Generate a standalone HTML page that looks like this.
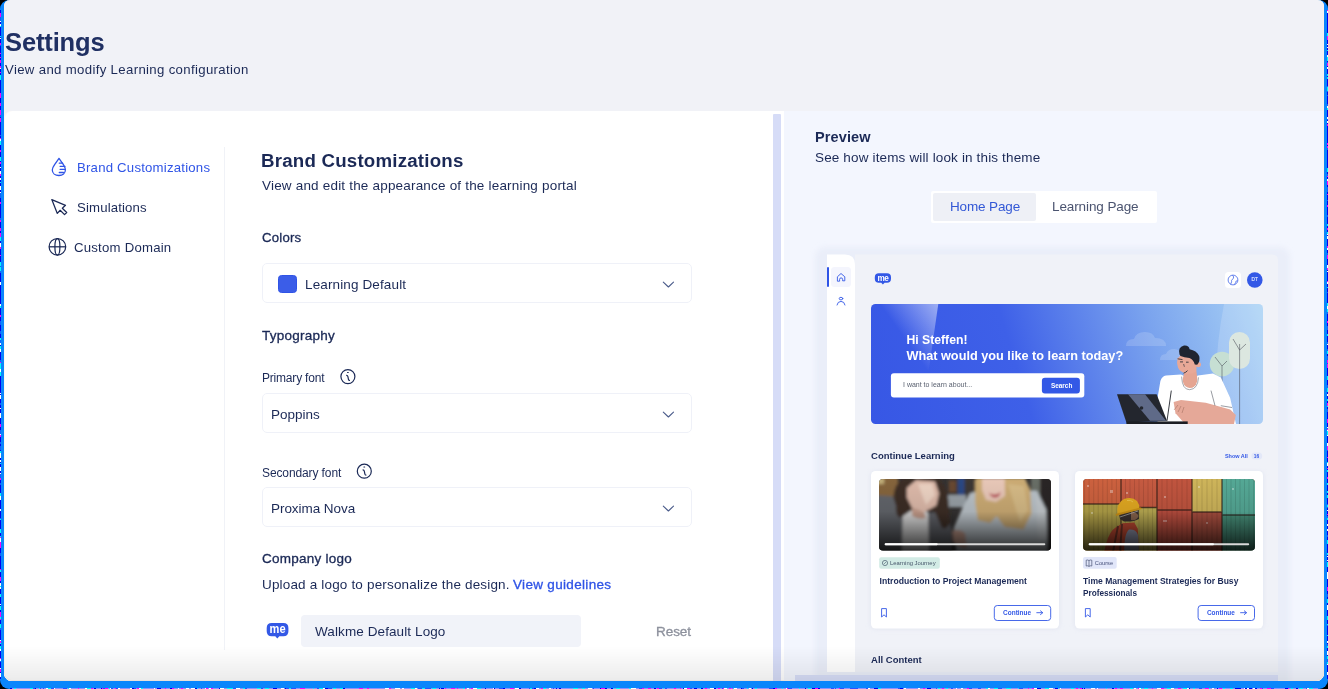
<!DOCTYPE html>
<html><head><meta charset="utf-8">
<style>
*{margin:0;padding:0;box-sizing:border-box}
html,body{width:1328px;height:689px;overflow:hidden;background:#000}
body{font-family:"Liberation Sans",sans-serif;color:#1b2956;position:relative}
.a{position:absolute;white-space:nowrap;line-height:1;will-change:transform}
.b{font-weight:700}
svg.ic{position:absolute;left:0;top:0;overflow:visible;will-change:transform}
#frame{position:absolute;left:0;top:0;width:1328px;height:689px;background:#0a86fc;border-radius:9px}
#noiseL{position:absolute;left:0;top:10px;width:1px;height:669px;background:linear-gradient(180deg,#0000f0 0px 3px,#ff00ff 3px 7px,#1060ff 7px 11px,#ffffff 11px 12px,#0000f0 12px 13px,#0000f0 13px 14px,#ffffff 14px 16px,#00ffff 16px 17px,#0000f0 17px 20px,#0000f0 20px 23px,#0000f0 23px 24px,#0000f0 24px 26px,#00ffff 26px 27px,#0000f0 27px 28px,#ffffff 28px 29px,#0000f0 29px 30px,#0000f0 30px 31px,#0000f0 31px 32px,#0000f0 32px 33px,#ff00ff 33px 35px,#1060ff 35px 36px,#0000f0 36px 40px,#0000f0 40px 41px,#0000f0 41px 43px,#ff00ff 43px 44px,#0000f0 44px 46px,#0000f0 46px 47px,#ff00ff 47px 48px,#0000f0 48px 50px,#ff00ff 50px 53px,#0000f0 53px 54px,#0000f0 54px 56px,#ff00ff 56px 58px,#ffffff 58px 59px,#0000f0 59px 61px,#0000f0 61px 62px,#ff00ff 62px 63px,#0000f0 63px 65px,#00ffff 65px 68px,#00ffff 68px 70px,#0000f0 70px 73px,#0000f0 73px 75px,#0000f0 75px 79px,#0000f0 79px 82px,#0000f0 82px 83px,#ff00ff 83px 85px,#ff00ff 85px 88px,#0000f0 88px 91px,#0000f0 91px 93px,#ff00ff 93px 96px,#0000f0 96px 98px,#0000f0 98px 100px,#ff00ff 100px 101px,#ff00ff 101px 104px,#ff00ff 104px 105px,#1060ff 105px 107px,#0000f0 107px 108px,#ff00ff 108px 112px,#0000f0 112px 114px,#0000f0 114px 115px,#0000f0 115px 119px,#0000f0 119px 121px,#0000f0 121px 125px,#1060ff 125px 126px,#0000f0 126px 128px,#ff00ff 128px 129px,#ffffff 129px 131px,#00ffff 131px 135px,#0000f0 135px 136px,#0000f0 136px 140px,#ff00ff 140px 142px,#0000f0 142px 143px,#0000f0 143px 147px,#00ffff 147px 151px,#0000f0 151px 152px,#ff00ff 152px 154px,#0000f0 154px 155px,#0000f0 155px 157px,#ffffff 157px 158px,#0000f0 158px 161px,#ffffff 161px 164px,#ff00ff 164px 166px,#0000f0 166px 168px,#ffffff 168px 170px,#0000f0 170px 172px,#00ffff 172px 173px,#0000f0 173px 176px,#ffffff 176px 180px,#0000f0 180px 182px,#ffffff 182px 183px,#1060ff 183px 185px,#1060ff 185px 188px,#0000f0 188px 190px,#0000f0 190px 192px,#ff00ff 192px 194px,#0000f0 194px 197px,#0000f0 197px 199px,#0000f0 199px 203px,#0000f0 203px 205px,#0000f0 205px 208px,#1060ff 208px 210px,#ff00ff 210px 212px,#0000f0 212px 216px,#0000f0 216px 218px,#ff00ff 218px 221px,#0000f0 221px 223px,#ff00ff 223px 227px,#00ffff 227px 231px,#0000f0 231px 233px,#ffffff 233px 237px,#ff00ff 237px 239px,#0000f0 239px 242px,#0000f0 242px 245px,#ff00ff 245px 246px,#0000f0 246px 248px,#0000f0 248px 252px,#00ffff 252px 256px,#1060ff 256px 257px,#00ffff 257px 261px,#1060ff 261px 263px,#0000f0 263px 267px,#0000f0 267px 271px,#0000f0 271px 272px,#ffffff 272px 275px,#0000f0 275px 278px,#0000f0 278px 279px,#0000f0 279px 283px,#0000f0 283px 285px,#0000f0 285px 286px,#0000f0 286px 287px,#0000f0 287px 289px,#0000f0 289px 291px,#0000f0 291px 294px,#ffffff 294px 296px,#00ffff 296px 298px,#0000f0 298px 302px,#0000f0 302px 305px,#ff00ff 305px 306px,#ff00ff 306px 307px,#0000f0 307px 309px,#0000f0 309px 311px,#1060ff 311px 315px,#0000f0 315px 317px,#0000f0 317px 320px,#0000f0 320px 321px,#1060ff 321px 324px,#0000f0 324px 326px,#0000f0 326px 328px,#00ffff 328px 330px,#1060ff 330px 333px,#ffffff 333px 335px,#0000f0 335px 336px,#00ffff 336px 339px,#ffffff 339px 342px,#0000f0 342px 343px,#0000f0 343px 346px,#0000f0 346px 348px,#0000f0 348px 350px,#1060ff 350px 352px,#ff00ff 352px 353px,#00ffff 353px 357px,#00ffff 357px 359px,#ffffff 359px 360px,#ffffff 360px 362px,#00ffff 362px 366px,#0000f0 366px 368px,#0000f0 368px 371px,#0000f0 371px 375px,#0000f0 375px 377px,#0000f0 377px 379px,#0000f0 379px 381px,#0000f0 381px 383px,#ffffff 383px 384px,#0000f0 384px 385px,#ffffff 385px 389px,#0000f0 389px 390px,#0000f0 390px 391px,#0000f0 391px 393px,#1060ff 393px 395px,#0000f0 395px 398px,#ffffff 398px 399px,#0000f0 399px 400px,#0000f0 400px 402px,#0000f0 402px 403px,#ffffff 403px 405px,#ffffff 405px 408px,#0000f0 408px 411px,#0000f0 411px 412px,#0000f0 412px 414px,#ff00ff 414px 417px,#0000f0 417px 420px,#1060ff 420px 424px,#ffffff 424px 425px,#ff00ff 425px 427px,#0000f0 427px 431px,#0000f0 431px 432px,#1060ff 432px 434px,#0000f0 434px 436px,#1060ff 436px 440px,#0000f0 440px 441px,#00ffff 441px 443px,#ffffff 443px 446px,#ffffff 446px 448px,#0000f0 448px 450px,#ffffff 450px 452px,#0000f0 452px 453px,#00ffff 453px 454px,#0000f0 454px 457px,#ffffff 457px 461px,#0000f0 461px 463px,#ffffff 463px 464px,#1060ff 464px 468px,#ff00ff 468px 470px,#0000f0 470px 473px,#1060ff 473px 475px,#0000f0 475px 476px,#0000f0 476px 480px,#0000f0 480px 482px,#0000f0 482px 483px,#00ffff 483px 485px,#00ffff 485px 486px,#ffffff 486px 490px,#0000f0 490px 491px,#0000f0 491px 492px,#0000f0 492px 495px,#0000f0 495px 499px,#ffffff 499px 501px,#0000f0 501px 502px,#0000f0 502px 505px,#0000f0 505px 507px,#0000f0 507px 508px,#1060ff 508px 509px,#00ffff 509px 510px,#0000f0 510px 514px,#0000f0 514px 516px,#0000f0 516px 519px,#00ffff 519px 523px,#0000f0 523px 526px,#00ffff 526px 527px,#ff00ff 527px 528px,#ffffff 528px 532px,#ff00ff 532px 534px,#ff00ff 534px 538px,#0000f0 538px 539px,#0000f0 539px 543px,#1060ff 543px 544px,#1060ff 544px 546px,#0000f0 546px 549px,#0000f0 549px 551px,#0000f0 551px 554px,#0000f0 554px 556px,#0000f0 556px 559px,#ff00ff 559px 560px,#00ffff 560px 562px,#0000f0 562px 563px,#0000f0 563px 567px,#ff00ff 567px 571px,#0000f0 571px 572px,#0000f0 572px 573px,#ffffff 573px 576px,#00ffff 576px 577px,#ffffff 577px 579px,#0000f0 579px 581px,#0000f0 581px 584px,#00ffff 584px 587px,#0000f0 587px 588px,#0000f0 588px 590px,#0000f0 590px 594px,#ffffff 594px 595px,#0000f0 595px 596px,#00ffff 596px 600px,#0000f0 600px 602px,#ff00ff 602px 604px,#ff00ff 604px 607px,#00ffff 607px 609px,#ff00ff 609px 610px,#0000f0 610px 614px,#00ffff 614px 618px,#1060ff 618px 620px,#0000f0 620px 621px,#0000f0 621px 625px,#0000f0 625px 627px,#0000f0 627px 628px,#0000f0 628px 629px,#0000f0 629px 630px,#ffffff 630px 631px,#ff00ff 631px 633px,#00ffff 633px 634px,#0000f0 634px 636px,#00ffff 636px 639px,#ffffff 639px 641px,#0000f0 641px 643px,#0000f0 643px 644px,#0000f0 644px 648px,#ff00ff 648px 649px,#ffffff 649px 651px,#1060ff 651px 652px,#0000f0 652px 654px,#0000f0 654px 656px,#0000f0 656px 658px,#ffffff 658px 659px,#ff00ff 659px 660px,#ff00ff 660px 662px,#0000f0 662px 663px,#ffffff 663px 667px,#0000f0 667px 669px)}
#noiseR{position:absolute;left:1327px;top:10px;width:1px;height:669px;background:linear-gradient(180deg,#ff00ff 0px 1px,#ffffff 1px 3px,#0000f0 3px 7px,#0000f0 7px 11px,#0000f0 11px 12px,#0000f0 12px 16px,#0000f0 16px 19px,#0000f0 19px 23px,#00ffff 23px 26px,#ff00ff 26px 30px,#0000f0 30px 34px,#ffffff 34px 35px,#0000f0 35px 37px,#ffffff 37px 38px,#0000f0 38px 39px,#0000f0 39px 40px,#00ffff 40px 41px,#0000f0 41px 45px,#ffffff 45px 46px,#ffffff 46px 47px,#00ffff 47px 51px,#0000f0 51px 52px,#1060ff 52px 53px,#ff00ff 53px 56px,#0000f0 56px 57px,#ffffff 57px 58px,#ffffff 58px 59px,#0000f0 59px 60px,#0000f0 60px 64px,#00ffff 64px 66px,#0000f0 66px 67px,#00ffff 67px 69px,#0000f0 69px 71px,#0000f0 71px 75px,#0000f0 75px 76px,#1060ff 76px 77px,#00ffff 77px 81px,#1060ff 81px 82px,#0000f0 82px 83px,#0000f0 83px 85px,#1060ff 85px 86px,#0000f0 86px 87px,#0000f0 87px 91px,#0000f0 91px 94px,#1060ff 94px 96px,#ffffff 96px 98px,#00ffff 98px 100px,#0000f0 100px 103px,#0000f0 103px 107px,#ffffff 107px 109px,#1060ff 109px 110px,#0000f0 110px 111px,#ffffff 111px 113px,#0000f0 113px 114px,#ff00ff 114px 116px,#0000f0 116px 117px,#0000f0 117px 120px,#0000f0 120px 122px,#0000f0 122px 126px,#0000f0 126px 128px,#0000f0 128px 130px,#0000f0 130px 132px,#0000f0 132px 133px,#ff00ff 133px 135px,#0000f0 135px 136px,#ff00ff 136px 138px,#1060ff 138px 140px,#0000f0 140px 141px,#0000f0 141px 145px,#0000f0 145px 148px,#0000f0 148px 150px,#0000f0 150px 154px,#0000f0 154px 158px,#00ffff 158px 162px,#0000f0 162px 164px,#1060ff 164px 166px,#ff00ff 166px 167px,#0000f0 167px 168px,#0000f0 168px 169px,#ffffff 169px 171px,#ff00ff 171px 175px,#0000f0 175px 177px,#1060ff 177px 178px,#1060ff 178px 182px,#0000f0 182px 183px,#0000f0 183px 184px,#ff00ff 184px 185px,#0000f0 185px 187px,#0000f0 187px 190px,#1060ff 190px 191px,#0000f0 191px 193px,#0000f0 193px 195px,#ff00ff 195px 197px,#0000f0 197px 198px,#0000f0 198px 201px,#0000f0 201px 205px,#1060ff 205px 207px,#0000f0 207px 210px,#0000f0 210px 214px,#00ffff 214px 216px,#0000f0 216px 218px,#ff00ff 218px 220px,#0000f0 220px 222px,#00ffff 222px 224px,#ffffff 224px 225px,#0000f0 225px 226px,#ffffff 226px 229px,#0000f0 229px 231px,#0000f0 231px 232px,#0000f0 232px 234px,#0000f0 234px 235px,#0000f0 235px 236px,#ff00ff 236px 238px,#ffffff 238px 240px,#0000f0 240px 241px,#0000f0 241px 243px,#1060ff 243px 245px,#ff00ff 245px 248px,#ff00ff 248px 249px,#0000f0 249px 251px,#0000f0 251px 255px,#ffffff 255px 258px,#ff00ff 258px 260px,#0000f0 260px 261px,#ffffff 261px 262px,#0000f0 262px 264px,#0000f0 264px 265px,#0000f0 265px 267px,#0000f0 267px 271px,#ff00ff 271px 272px,#ffffff 272px 274px,#0000f0 274px 277px,#00ffff 277px 278px,#0000f0 278px 282px,#1060ff 282px 283px,#0000f0 283px 286px,#0000f0 286px 288px,#0000f0 288px 290px,#0000f0 290px 293px,#00ffff 293px 296px,#ffffff 296px 299px,#00ffff 299px 302px,#1060ff 302px 304px,#0000f0 304px 308px,#0000f0 308px 311px,#ff00ff 311px 313px,#0000f0 313px 316px,#1060ff 316px 320px,#0000f0 320px 321px,#0000f0 321px 323px,#0000f0 323px 324px,#00ffff 324px 326px,#0000f0 326px 328px,#0000f0 328px 330px,#0000f0 330px 331px,#0000f0 331px 332px,#1060ff 332px 334px,#ffffff 334px 335px,#0000f0 335px 338px,#0000f0 338px 339px,#1060ff 339px 341px,#00ffff 341px 343px,#00ffff 343px 344px,#0000f0 344px 346px,#1060ff 346px 350px,#ff00ff 350px 351px,#ff00ff 351px 353px,#1060ff 353px 354px,#ff00ff 354px 358px,#0000f0 358px 359px,#0000f0 359px 360px,#0000f0 360px 362px,#0000f0 362px 365px,#0000f0 365px 366px,#00ffff 366px 370px,#0000f0 370px 371px,#0000f0 371px 375px,#1060ff 375px 378px,#00ffff 378px 382px,#0000f0 382px 384px,#ffffff 384px 386px,#0000f0 386px 389px,#00ffff 389px 391px,#0000f0 391px 393px,#ff00ff 393px 396px,#00ffff 396px 397px,#0000f0 397px 398px,#0000f0 398px 399px,#1060ff 399px 402px,#0000f0 402px 405px,#0000f0 405px 407px,#0000f0 407px 409px,#ff00ff 409px 413px,#0000f0 413px 417px,#ffffff 417px 418px,#1060ff 418px 419px,#ff00ff 419px 420px,#ffffff 420px 421px,#00ffff 421px 425px,#ffffff 425px 426px,#0000f0 426px 427px,#0000f0 427px 428px,#0000f0 428px 429px,#0000f0 429px 431px,#0000f0 431px 433px,#ffffff 433px 436px,#ff00ff 436px 440px,#1060ff 440px 441px,#0000f0 441px 444px,#0000f0 444px 446px,#0000f0 446px 447px,#ff00ff 447px 448px,#0000f0 448px 450px,#0000f0 450px 452px,#00ffff 452px 453px,#ffffff 453px 456px,#0000f0 456px 458px,#ff00ff 458px 459px,#0000f0 459px 460px,#00ffff 460px 462px,#0000f0 462px 464px,#0000f0 464px 466px,#0000f0 466px 467px,#ff00ff 467px 469px,#0000f0 469px 473px,#00ffff 473px 475px,#0000f0 475px 476px,#0000f0 476px 478px,#0000f0 478px 481px,#00ffff 481px 483px,#0000f0 483px 485px,#00ffff 485px 488px,#0000f0 488px 489px,#0000f0 489px 491px,#0000f0 491px 493px,#0000f0 493px 494px,#1060ff 494px 495px,#00ffff 495px 497px,#1060ff 497px 498px,#0000f0 498px 500px,#ffffff 500px 501px,#0000f0 501px 503px,#0000f0 503px 504px,#ff00ff 504px 505px,#0000f0 505px 506px,#1060ff 506px 508px,#00ffff 508px 510px,#0000f0 510px 513px,#0000f0 513px 514px,#ffffff 514px 515px,#ffffff 515px 516px,#0000f0 516px 519px,#ffffff 519px 521px,#0000f0 521px 524px,#0000f0 524px 525px,#1060ff 525px 527px,#0000f0 527px 529px,#0000f0 529px 530px,#00ffff 530px 532px,#00ffff 532px 534px,#0000f0 534px 535px,#0000f0 535px 537px,#0000f0 537px 539px,#0000f0 539px 541px,#0000f0 541px 543px,#00ffff 543px 545px,#0000f0 545px 546px,#ffffff 546px 547px,#0000f0 547px 549px,#0000f0 549px 550px,#ffffff 550px 551px,#0000f0 551px 552px,#00ffff 552px 556px,#00ffff 556px 557px,#0000f0 557px 558px,#0000f0 558px 562px,#ffffff 562px 566px,#ffffff 566px 568px,#ffffff 568px 569px,#0000f0 569px 570px,#0000f0 570px 572px,#0000f0 572px 573px,#0000f0 573px 575px,#0000f0 575px 577px,#ff00ff 577px 581px,#0000f0 581px 583px,#0000f0 583px 584px,#1060ff 584px 587px,#0000f0 587px 588px,#0000f0 588px 589px,#00ffff 589px 593px,#0000f0 593px 595px,#ffffff 595px 597px,#ffffff 597px 600px,#0000f0 600px 601px,#0000f0 601px 603px,#0000f0 603px 606px,#00ffff 606px 610px,#0000f0 610px 611px,#0000f0 611px 613px,#0000f0 613px 614px,#00ffff 614px 615px,#1060ff 615px 616px,#0000f0 616px 620px,#0000f0 620px 622px,#0000f0 622px 625px,#00ffff 625px 626px,#0000f0 626px 628px,#0000f0 628px 631px,#ffffff 631px 633px,#0000f0 633px 634px,#1060ff 634px 636px,#00ffff 636px 638px,#0000f0 638px 640px,#0000f0 640px 641px,#ffffff 641px 645px,#0000f0 645px 646px,#00ffff 646px 649px,#1060ff 649px 650px,#1060ff 650px 652px,#00ffff 652px 654px,#ffffff 654px 655px,#0000f0 655px 657px,#0000f0 657px 659px,#0000f0 659px 662px,#ffffff 662px 665px,#0000f0 665px 666px,#0000f0 666px 670px)}
#noiseB{position:absolute;left:10px;top:688px;width:1308px;height:1px;background:linear-gradient(90deg,#0000f0 0px 1px,#0000f0 1px 2px,#9090ff 2px 4px,#00ffff 4px 6px,#9090ff 6px 7px,#9090ff 7px 9px,#9090ff 9px 10px,#9090ff 10px 12px,#9090ff 12px 16px,#9090ff 16px 20px,#00ffff 20px 23px,#3050ff 23px 24px,#3050ff 24px 25px,#0000f0 25px 26px,#9090ff 26px 29px,#00ffff 29px 30px,#3050ff 30px 31px,#9090ff 31px 33px,#3050ff 33px 34px,#9090ff 34px 36px,#ffffff 36px 38px,#00ffff 38px 41px,#3050ff 41px 44px,#ffffff 44px 45px,#9090ff 45px 49px,#9090ff 49px 53px,#3050ff 53px 57px,#9090ff 57px 58px,#00ffff 58px 59px,#ffffff 59px 61px,#9090ff 61px 64px,#9090ff 64px 68px,#ff00ff 68px 69px,#9090ff 69px 71px,#9090ff 71px 73px,#9090ff 73px 75px,#ffffff 75px 77px,#00ffff 77px 81px,#ff00ff 81px 83px,#9090ff 83px 84px,#0000f0 84px 86px,#9090ff 86px 89px,#9090ff 89px 91px,#0000f0 91px 92px,#ff00ff 92px 93px,#3050ff 93px 95px,#ff00ff 95px 98px,#9090ff 98px 99px,#00ffff 99px 100px,#ffffff 100px 101px,#3050ff 101px 103px,#9090ff 103px 105px,#ff00ff 105px 106px,#3050ff 106px 108px,#ffffff 108px 110px,#9090ff 110px 113px,#9090ff 113px 116px,#9090ff 116px 120px,#ffffff 120px 122px,#0000f0 122px 124px,#3050ff 124px 126px,#9090ff 126px 127px,#ff00ff 127px 129px,#ffffff 129px 131px,#00ffff 131px 133px,#9090ff 133px 137px,#9090ff 137px 138px,#9090ff 138px 140px,#9090ff 140px 141px,#9090ff 141px 144px,#ffffff 144px 145px,#9090ff 145px 147px,#0000f0 147px 151px,#9090ff 151px 155px,#ff00ff 155px 156px,#9090ff 156px 158px,#9090ff 158px 160px,#0000f0 160px 162px,#ff00ff 162px 164px,#9090ff 164px 165px,#9090ff 165px 167px,#9090ff 167px 168px,#ffffff 168px 169px,#9090ff 169px 171px,#ff00ff 171px 173px,#9090ff 173px 174px,#9090ff 174px 176px,#ffffff 176px 179px,#9090ff 179px 181px,#ffffff 181px 185px,#0000f0 185px 187px,#00ffff 187px 188px,#9090ff 188px 190px,#9090ff 190px 191px,#3050ff 191px 192px,#9090ff 192px 195px,#ffffff 195px 196px,#ff00ff 196px 198px,#9090ff 198px 199px,#ffffff 199px 201px,#ff00ff 201px 203px,#9090ff 203px 204px,#9090ff 204px 207px,#9090ff 207px 209px,#0000f0 209px 210px,#ffffff 210px 214px,#9090ff 214px 215px,#9090ff 215px 217px,#00ffff 217px 221px,#00ffff 221px 223px,#3050ff 223px 226px,#ffffff 226px 230px,#9090ff 230px 232px,#9090ff 232px 233px,#00ffff 233px 235px,#3050ff 235px 237px,#9090ff 237px 238px,#9090ff 238px 241px,#9090ff 241px 243px,#9090ff 243px 245px,#9090ff 245px 246px,#9090ff 246px 247px,#00ffff 247px 251px,#3050ff 251px 253px,#9090ff 253px 255px,#00ffff 255px 259px,#9090ff 259px 260px,#9090ff 260px 263px,#0000f0 263px 267px,#9090ff 267px 271px,#ffffff 271px 274px,#9090ff 274px 275px,#0000f0 275px 276px,#3050ff 276px 279px,#00ffff 279px 281px,#3050ff 281px 284px,#3050ff 284px 286px,#9090ff 286px 288px,#9090ff 288px 290px,#ff00ff 290px 293px,#ff00ff 293px 295px,#9090ff 295px 297px,#9090ff 297px 299px,#9090ff 299px 303px,#00ffff 303px 304px,#9090ff 304px 305px,#9090ff 305px 307px,#3050ff 307px 309px,#00ffff 309px 313px,#ffffff 313px 315px,#0000f0 315px 318px,#3050ff 318px 322px,#9090ff 322px 323px,#00ffff 323px 326px,#9090ff 326px 330px,#00ffff 330px 333px,#0000f0 333px 335px,#9090ff 335px 336px,#9090ff 336px 339px,#9090ff 339px 341px,#9090ff 341px 345px,#9090ff 345px 346px,#9090ff 346px 349px,#ff00ff 349px 353px,#9090ff 353px 357px,#ff00ff 357px 359px,#9090ff 359px 363px,#9090ff 363px 367px,#9090ff 367px 368px,#9090ff 368px 372px,#9090ff 372px 375px,#ffffff 375px 379px,#ff00ff 379px 381px,#9090ff 381px 384px,#9090ff 384px 385px,#ffffff 385px 387px,#ffffff 387px 390px,#9090ff 390px 392px,#ffffff 392px 394px,#9090ff 394px 395px,#9090ff 395px 397px,#9090ff 397px 399px,#9090ff 399px 400px,#9090ff 400px 401px,#00ffff 401px 403px,#00ffff 403px 405px,#ffffff 405px 407px,#9090ff 407px 408px,#3050ff 408px 412px,#00ffff 412px 415px,#3050ff 415px 418px,#3050ff 418px 421px,#9090ff 421px 422px,#00ffff 422px 426px,#9090ff 426px 429px,#0000f0 429px 430px,#9090ff 430px 431px,#0000f0 431px 434px,#9090ff 434px 435px,#ff00ff 435px 436px,#9090ff 436px 437px,#9090ff 437px 439px,#9090ff 439px 441px,#ff00ff 441px 445px,#9090ff 445px 447px,#ff00ff 447px 448px,#9090ff 448px 452px,#9090ff 452px 453px,#00ffff 453px 455px,#ff00ff 455px 456px,#9090ff 456px 457px,#ffffff 457px 459px,#9090ff 459px 460px,#9090ff 460px 461px,#ff00ff 461px 463px,#ffffff 463px 467px,#00ffff 467px 471px,#9090ff 471px 475px,#0000f0 475px 476px,#9090ff 476px 479px,#9090ff 479px 483px,#ffffff 483px 484px,#0000f0 484px 485px,#9090ff 485px 489px,#3050ff 489px 493px,#0000f0 493px 495px,#9090ff 495px 496px,#9090ff 496px 497px,#9090ff 497px 500px,#ff00ff 500px 504px,#9090ff 504px 505px,#ffffff 505px 509px,#0000f0 509px 511px,#9090ff 511px 515px,#9090ff 515px 517px,#9090ff 517px 519px,#3050ff 519px 520px,#00ffff 520px 522px,#3050ff 522px 524px,#0000f0 524px 526px,#ffffff 526px 529px,#9090ff 529px 531px,#ff00ff 531px 533px,#00ffff 533px 536px,#9090ff 536px 537px,#9090ff 537px 539px,#ffffff 539px 540px,#ffffff 540px 541px,#9090ff 541px 543px,#3050ff 543px 544px,#9090ff 544px 546px,#0000f0 546px 547px,#9090ff 547px 549px,#0000f0 549px 551px,#9090ff 551px 552px,#9090ff 552px 556px,#9090ff 556px 559px,#9090ff 559px 563px,#00ffff 563px 564px,#00ffff 564px 567px,#00ffff 567px 568px,#9090ff 568px 570px,#9090ff 570px 572px,#00ffff 572px 575px,#9090ff 575px 578px,#ffffff 578px 582px,#9090ff 582px 583px,#3050ff 583px 584px,#9090ff 584px 586px,#9090ff 586px 588px,#9090ff 588px 590px,#0000f0 590px 591px,#ff00ff 591px 595px,#0000f0 595px 596px,#0000f0 596px 597px,#9090ff 597px 601px,#0000f0 601px 603px,#00ffff 603px 604px,#9090ff 604px 606px,#00ffff 606px 610px,#9090ff 610px 614px,#9090ff 614px 617px,#9090ff 617px 619px,#00ffff 619px 621px,#ffffff 621px 624px,#ffffff 624px 626px,#9090ff 626px 629px,#3050ff 629px 632px,#ff00ff 632px 634px,#9090ff 634px 638px,#ff00ff 638px 641px,#9090ff 641px 643px,#9090ff 643px 644px,#0000f0 644px 646px,#9090ff 646px 647px,#ff00ff 647px 649px,#3050ff 649px 652px,#9090ff 652px 653px,#00ffff 653px 654px,#9090ff 654px 655px,#3050ff 655px 656px,#3050ff 656px 657px,#9090ff 657px 661px,#9090ff 661px 662px,#9090ff 662px 664px,#ff00ff 664px 666px,#9090ff 666px 670px,#ff00ff 670px 671px,#9090ff 671px 673px,#0000f0 673px 674px,#ffffff 674px 677px,#ff00ff 677px 680px,#3050ff 680px 682px,#9090ff 682px 684px,#0000f0 684px 685px,#0000f0 685px 687px,#9090ff 687px 690px,#00ffff 690px 691px,#0000f0 691px 693px,#9090ff 693px 695px,#ff00ff 695px 697px,#9090ff 697px 699px,#9090ff 699px 700px,#ffffff 700px 704px,#0000f0 704px 706px,#9090ff 706px 708px,#ff00ff 708px 709px,#ff00ff 709px 710px,#9090ff 710px 712px,#3050ff 712px 713px,#ff00ff 713px 714px,#ffffff 714px 717px,#9090ff 717px 719px,#ff00ff 719px 721px,#9090ff 721px 722px,#ff00ff 722px 723px,#00ffff 723px 724px,#ffffff 724px 727px,#9090ff 727px 728px,#9090ff 728px 731px,#0000f0 731px 732px,#3050ff 732px 734px,#9090ff 734px 736px,#9090ff 736px 737px,#00ffff 737px 738px,#9090ff 738px 739px,#ffffff 739px 741px,#9090ff 741px 742px,#0000f0 742px 743px,#9090ff 743px 745px,#00ffff 745px 747px,#9090ff 747px 748px,#9090ff 748px 752px,#9090ff 752px 753px,#9090ff 753px 757px,#9090ff 757px 758px,#9090ff 758px 759px,#3050ff 759px 763px,#0000f0 763px 765px,#ff00ff 765px 767px,#9090ff 767px 768px,#9090ff 768px 770px,#9090ff 770px 772px,#00ffff 772px 773px,#9090ff 773px 774px,#9090ff 774px 776px,#ffffff 776px 777px,#ff00ff 777px 778px,#3050ff 778px 782px,#9090ff 782px 783px,#9090ff 783px 785px,#9090ff 785px 789px,#00ffff 789px 790px,#9090ff 790px 791px,#9090ff 791px 795px,#0000f0 795px 796px,#9090ff 796px 798px,#00ffff 798px 801px,#9090ff 801px 802px,#0000f0 802px 805px,#ff00ff 805px 808px,#0000f0 808px 810px,#9090ff 810px 812px,#9090ff 812px 815px,#9090ff 815px 817px,#9090ff 817px 821px,#3050ff 821px 824px,#9090ff 824px 825px,#3050ff 825px 826px,#9090ff 826px 828px,#9090ff 828px 829px,#ff00ff 829px 830px,#3050ff 830px 834px,#9090ff 834px 835px,#9090ff 835px 839px,#9090ff 839px 840px,#3050ff 840px 841px,#3050ff 841px 844px,#3050ff 844px 848px,#9090ff 848px 850px,#9090ff 850px 852px,#9090ff 852px 856px,#3050ff 856px 857px,#3050ff 857px 858px,#ffffff 858px 860px,#9090ff 860px 864px,#0000f0 864px 868px,#00ffff 868px 871px,#9090ff 871px 874px,#9090ff 874px 876px,#9090ff 876px 879px,#9090ff 879px 882px,#9090ff 882px 886px,#9090ff 886px 888px,#3050ff 888px 890px,#0000f0 890px 893px,#9090ff 893px 894px,#ffffff 894px 896px,#9090ff 896px 899px,#9090ff 899px 903px,#9090ff 903px 906px,#9090ff 906px 908px,#ffffff 908px 910px,#9090ff 910px 911px,#9090ff 911px 913px,#ff00ff 913px 915px,#9090ff 915px 917px,#0000f0 917px 921px,#9090ff 921px 923px,#9090ff 923px 926px,#3050ff 926px 927px,#9090ff 927px 928px,#00ffff 928px 930px,#9090ff 930px 932px,#ff00ff 932px 934px,#9090ff 934px 936px,#00ffff 936px 938px,#9090ff 938px 941px,#3050ff 941px 943px,#9090ff 943px 946px,#ffffff 946px 947px,#9090ff 947px 951px,#ffffff 951px 953px,#9090ff 953px 957px,#ff00ff 957px 959px,#3050ff 959px 962px,#9090ff 962px 966px,#9090ff 966px 968px,#3050ff 968px 971px,#9090ff 971px 974px,#9090ff 974px 976px,#00ffff 976px 978px,#ffffff 978px 980px,#9090ff 980px 984px,#00ffff 984px 986px,#00ffff 986px 988px,#3050ff 988px 992px,#9090ff 992px 993px,#9090ff 993px 995px,#9090ff 995px 996px,#00ffff 996px 997px,#00ffff 997px 1001px,#9090ff 1001px 1004px,#9090ff 1004px 1008px,#00ffff 1008px 1009px,#3050ff 1009px 1013px,#9090ff 1013px 1017px,#9090ff 1017px 1018px,#ff00ff 1018px 1019px,#9090ff 1019px 1021px,#9090ff 1021px 1022px,#ff00ff 1022px 1024px,#ffffff 1024px 1027px,#0000f0 1027px 1031px,#9090ff 1031px 1035px,#00ffff 1035px 1036px,#00ffff 1036px 1039px,#ffffff 1039px 1043px,#9090ff 1043px 1045px,#0000f0 1045px 1048px,#00ffff 1048px 1049px,#9090ff 1049px 1050px,#ffffff 1050px 1051px,#9090ff 1051px 1053px,#9090ff 1053px 1055px,#9090ff 1055px 1059px,#9090ff 1059px 1061px,#00ffff 1061px 1064px,#9090ff 1064px 1066px,#ff00ff 1066px 1068px,#9090ff 1068px 1070px,#ff00ff 1070px 1072px,#0000f0 1072px 1073px,#9090ff 1073px 1074px,#0000f0 1074px 1075px,#9090ff 1075px 1077px,#9090ff 1077px 1079px,#9090ff 1079px 1081px,#ffffff 1081px 1085px,#9090ff 1085px 1087px,#ffffff 1087px 1088px,#9090ff 1088px 1091px,#9090ff 1091px 1092px,#9090ff 1092px 1096px,#00ffff 1096px 1097px,#9090ff 1097px 1099px,#9090ff 1099px 1102px,#0000f0 1102px 1104px,#9090ff 1104px 1105px,#ff00ff 1105px 1107px,#9090ff 1107px 1109px,#9090ff 1109px 1110px,#ff00ff 1110px 1113px,#9090ff 1113px 1117px,#9090ff 1117px 1118px,#9090ff 1118px 1120px,#00ffff 1120px 1123px,#9090ff 1123px 1124px,#ffffff 1124px 1126px,#9090ff 1126px 1128px,#ff00ff 1128px 1129px,#ffffff 1129px 1131px,#00ffff 1131px 1132px,#9090ff 1132px 1134px,#00ffff 1134px 1138px,#9090ff 1138px 1139px,#9090ff 1139px 1142px,#ff00ff 1142px 1143px,#9090ff 1143px 1144px,#9090ff 1144px 1147px,#ffffff 1147px 1151px,#ff00ff 1151px 1154px,#9090ff 1154px 1157px,#00ffff 1157px 1161px,#ffffff 1161px 1164px,#9090ff 1164px 1166px,#9090ff 1166px 1167px,#9090ff 1167px 1168px,#ff00ff 1168px 1171px,#9090ff 1171px 1173px,#00ffff 1173px 1177px,#ffffff 1177px 1179px,#0000f0 1179px 1180px,#9090ff 1180px 1182px,#9090ff 1182px 1183px,#00ffff 1183px 1185px,#9090ff 1185px 1187px,#9090ff 1187px 1189px,#3050ff 1189px 1192px,#9090ff 1192px 1195px,#ff00ff 1195px 1199px,#00ffff 1199px 1200px,#9090ff 1200px 1201px,#9090ff 1201px 1202px,#ffffff 1202px 1204px,#9090ff 1204px 1207px,#0000f0 1207px 1208px,#9090ff 1208px 1209px,#ff00ff 1209px 1212px,#9090ff 1212px 1213px,#00ffff 1213px 1215px,#9090ff 1215px 1218px,#9090ff 1218px 1220px,#00ffff 1220px 1222px,#00ffff 1222px 1223px,#9090ff 1223px 1225px,#0000f0 1225px 1227px,#0000f0 1227px 1231px,#9090ff 1231px 1234px,#ffffff 1234px 1235px,#0000f0 1235px 1237px,#ffffff 1237px 1239px,#0000f0 1239px 1240px,#0000f0 1240px 1242px,#9090ff 1242px 1243px,#ffffff 1243px 1245px,#0000f0 1245px 1247px,#9090ff 1247px 1250px,#ff00ff 1250px 1252px,#3050ff 1252px 1253px,#9090ff 1253px 1254px,#9090ff 1254px 1256px,#9090ff 1256px 1257px,#ff00ff 1257px 1261px,#3050ff 1261px 1264px,#9090ff 1264px 1266px,#9090ff 1266px 1268px,#9090ff 1268px 1270px,#9090ff 1270px 1272px,#9090ff 1272px 1275px,#0000f0 1275px 1277px,#0000f0 1277px 1278px,#ff00ff 1278px 1279px,#9090ff 1279px 1281px,#00ffff 1281px 1283px,#9090ff 1283px 1285px,#9090ff 1285px 1286px,#0000f0 1286px 1288px,#9090ff 1288px 1289px,#00ffff 1289px 1293px,#9090ff 1293px 1295px,#9090ff 1295px 1296px,#3050ff 1296px 1297px,#ffffff 1297px 1299px,#00ffff 1299px 1303px,#9090ff 1303px 1307px,#9090ff 1307px 1309px)}
#content{position:absolute;left:4px;top:0;width:1320px;height:681px;background:#f1f2f7;border-radius:6px 6px 8px 8px;box-shadow:inset 1px 0 #fbf3ee,inset -1px 0 #fbf3ee,inset 0 -1px #fbf3ee}
#card{position:absolute;left:4px;top:111px;width:780px;height:570px;background:#fff;border-radius:8px 0 0 8px;box-shadow:inset 1px 0 #fdf8f5,inset 0 -1px #fbf3ee}
#right{position:absolute;left:784px;top:111px;width:540px;height:570px;background:#f3f6fe;border-radius:0 0 8px 0;box-shadow:inset -1px 0 #fbf3ee,inset 0 -1px #fbf3ee}
#divider{position:absolute;left:773px;top:114px;width:8px;height:567px;background:#d6dcf7;border-radius:1px 1px 0 0}
#vline{position:absolute;left:224px;top:147px;width:1px;height:503px;background:#f0f2f7}
#fade{position:absolute;left:4px;top:646px;width:1320px;height:35px;background:linear-gradient(rgba(0,0,0,0),rgba(0,0,0,.08));border-radius:0 0 8px 8px}
.sel{position:absolute;left:261.5px;width:430.5px;height:40px;border:1px solid #eff1f8;border-radius:5px;background:#fff}
.t14{font-size:13.5px}
.sb{-webkit-text-stroke:0.32px currentColor}
</style></head><body>
<div id="frame"></div>
<div id="noiseL"></div><div id="noiseR"></div><div id="noiseB"></div>
<div id="content"></div>
<div id="card"></div>
<div id="right"></div>
<div id="vline"></div>

<!-- header -->
<div class="a b" id="t_settings" style="left:5px;top:30.4px;font-size:25.5px;letter-spacing:-0.13px;color:#203063">Settings</div>
<div class="a" id="t_sub" style="left:5px;top:62.6px;font-size:13.2px;letter-spacing:0.34px">View and modify Learning configuration</div>

<!-- nav -->
<svg class="ic" width="1328" height="689" style="pointer-events:none">
 <g fill="none" stroke="#2f54e6" stroke-width="1.3" stroke-linejoin="round" stroke-linecap="round">
  <path d="M59,158.4 L54.6,164.6 C53,166.8 52.3,168.3 52.3,170 C52.3,173.3 55.2,175.5 58.9,175.5 C62.6,175.5 65.4,173.2 65.4,169.8 C65.4,168.1 64.8,166.7 63.4,164.6 Z"/>
  <path d="M59.3,163.2 H62.6 M60.1,166.3 H65 M60.1,169.3 H65.3 M59.3,172.5 H63.4"/>
 </g>
 <g fill="none" stroke="#1b2956" stroke-width="1.25" stroke-linejoin="round">
  <path d="M51.8,199.6 L65.5,205.3 L62.3,208.2 L66.7,212.5 L64.5,214.6 L60.2,210.3 L57.3,213.4 Z"/>
  <circle cx="57.4" cy="246.8" r="8.3"/>
  <ellipse cx="57.4" cy="246.8" rx="2.5" ry="8.3"/>
  <path d="M49.1,246.8 H65.7"/>
 </g>
</svg>
<div class="a" id="t_nav1" style="left:77px;top:160.7px;font-size:13.2px;letter-spacing:0.21px;color:#2f54e6">Brand Customizations</div>
<div class="a" id="t_nav2" style="left:77px;top:200.8px;font-size:13.2px;letter-spacing:0.15px">Simulations</div>
<div class="a" id="t_nav3" style="left:74px;top:241px;font-size:13.2px;letter-spacing:0.22px">Custom Domain</div>

<!-- main -->
<div class="a b" id="t_h1" style="left:261px;top:152.2px;font-size:18.7px;letter-spacing:0.21px">Brand Customizations</div>
<div class="a t14" id="t_sub2" style="left:261.5px;top:178.6px;letter-spacing:0.19px">View and edit the appearance of the learning portal</div>
<div class="a sb" id="t_colors" style="left:261.5px;top:230.7px;font-size:13.2px;letter-spacing:0.2px">Colors</div>
<div class="sel" style="top:263px"></div>
<div class="a" style="left:278px;top:275px;width:18.5px;height:18px;background:#3b5de8;border:1px solid #3054e6;border-radius:3.5px"></div>
<div class="a t14" id="t_ld" style="left:305px;top:277.9px;letter-spacing:0.13px">Learning Default</div>

<div class="a sb t14" id="t_typo" style="left:261.5px;top:328.7px;letter-spacing:0.24px">Typography</div>
<div class="a" id="t_pf" style="left:261.5px;top:372.2px;font-size:12px;letter-spacing:-0.2px">Primary font</div>
<div class="sel" style="top:393px"></div>
<div class="a t14" id="t_pop" style="left:271.4px;top:408px">Poppins</div>
<div class="a" id="t_sf" style="left:261.5px;top:466.6px;font-size:12px;letter-spacing:-0.11px">Secondary font</div>
<div class="sel" style="top:487px"></div>
<div class="a t14" id="t_pn" style="left:271.4px;top:502px;letter-spacing:-0.05px">Proxima Nova</div>

<svg class="ic" width="1328" height="689">
 <g fill="none" stroke="#4a5b8a" stroke-width="1.1" stroke-linecap="round" stroke-linejoin="round">
  <path d="M663.3,282.2 L668.4,287 L673.5,282.2"/>
  <path d="M663.3,412.2 L668.4,417 L673.5,412.2"/>
  <path d="M663.3,506.2 L668.4,511 L673.5,506.2"/>
 </g>
 <g fill="none" stroke="#1b2956" stroke-width="1.2">
  <circle cx="347.9" cy="376.6" r="7"/>
  <circle cx="364.3" cy="471.2" r="7"/>
  <path d="M346.2,375.4 Q347.6,375.2 347.9,376.6 L348.5,379.6 Q348.8,380.6 350,380.4 M362.6,470 Q364,469.8 364.3,471.2 L364.9,474.2 Q365.2,475.2 366.4,475"/>
 </g>
 <g fill="#1b2956"><rect x="347" y="371.9" width="1.8" height="1" rx="0.5"/><rect x="363.4" y="466.5" width="1.8" height="1" rx="0.5"/></g>
</svg>

<div class="a sb t14" id="t_cl" style="left:261.5px;top:552.2px;letter-spacing:0.25px">Company logo</div>
<div class="a t14" id="t_up" style="left:261.5px;top:577.5px;letter-spacing:0.17px">Upload a logo to personalize the design.</div>
<div class="a sb t14" id="t_vg" style="left:513.3px;top:577.5px;letter-spacing:0.32px;color:#2f54e6">View guidelines</div>
<svg class="ic" width="1328" height="689">
 <path d="M271.7,623.1 H283.4 Q288.4,623.1 288.4,628.1 V631.2 Q288.4,636.2 283.4,636.2 H279.3 L277.3,638.6 L275.3,636.2 H271.7 Q266.7,636.2 266.7,631.2 V628.1 Q266.7,623.1 271.7,623.1 Z" fill="#3358e6"/>
 <text x="277.6" y="633.4" text-anchor="middle" font-family="Liberation Sans" font-weight="700" font-size="12" fill="#fff" textLength="16" lengthAdjust="spacingAndGlyphs">me</text>
</svg>
<div class="a" style="left:301.3px;top:615.4px;width:280.4px;height:31.5px;background:#f1f3f9;border-radius:4px"></div>
<div class="a t14" id="t_wdl" style="left:314.5px;top:624.6px;letter-spacing:0.1px">Walkme Default Logo</div>
<div class="a sb t14" id="t_reset" style="left:656.2px;top:624.6px;letter-spacing:-0.05px;color:#8d919d">Reset</div>

<div id="divider"></div>

<!-- right panel -->
<div class="a b" id="t_prev" style="left:814.7px;top:129.9px;font-size:14.5px;letter-spacing:0.11px">Preview</div>
<div class="a t14" id="t_see" style="left:814.7px;top:150.6px;letter-spacing:0.15px">See how items will look in this theme</div>
<div class="a" style="left:931px;top:190.7px;width:225.5px;height:32px;background:#fff;border-radius:2px"></div>
<div class="a" style="left:933.2px;top:192.8px;width:102.7px;height:27.8px;background:#eef0f6;border-radius:2px"></div>
<div class="a t14" id="t_hp" style="left:949.5px;top:199.8px;letter-spacing:-0.13px;color:#3358d6">Home Page</div>
<div class="a t14" id="t_lp" style="left:1052px;top:199.8px;letter-spacing:-0.1px;color:#4b5470">Learning Page</div>

<!-- preview -->
<svg class="ic" width="1328" height="689" font-family="Liberation Sans">
 <defs>
  <filter id="fsh" x="-20%" y="-20%" width="140%" height="140%"><feGaussianBlur stdDeviation="2.5"/></filter>
  <filter id="csh" x="-20%" y="-20%" width="140%" height="140%"><feGaussianBlur stdDeviation="2"/></filter>
  <filter id="blur1" x="-5%" y="-5%" width="110%" height="110%"><feGaussianBlur stdDeviation="1.6"/></filter>
  <filter id="blur05"><feGaussianBlur stdDeviation="0.7"/></filter>
  <linearGradient id="bn" x1="871" y1="424" x2="1263" y2="304" gradientUnits="userSpaceOnUse">
   <stop offset="0" stop-color="#3757e5"/>
   <stop offset="0.38" stop-color="#3e60e8"/>
   <stop offset="0.72" stop-color="#7aa3ee"/>
   <stop offset="1" stop-color="#a9d2f5"/>
  </linearGradient>
  <linearGradient id="refl" x1="904" y1="338" x2="942.7" y2="310.4" gradientUnits="userSpaceOnUse">
   <stop offset="0" stop-color="#fff" stop-opacity="0"/>
   <stop offset="1" stop-color="#fff" stop-opacity="0.5"/>
  </linearGradient>
  <linearGradient id="imgfade" x1="0" y1="0" x2="0" y2="1">
   <stop offset="0" stop-color="#000" stop-opacity="0.02"/>
   <stop offset="0.45" stop-color="#000" stop-opacity="0.1"/>
   <stop offset="1" stop-color="#000" stop-opacity="0.8"/>
  </linearGradient>
  <clipPath id="cclip"><rect x="784" y="111" width="539" height="569"/></clipPath>
  <clipPath id="bclip"><rect x="871" y="304" width="392" height="120" rx="4.5"/></clipPath>
  <clipPath id="i1clip"><rect x="879" y="479" width="172" height="71.5" rx="4"/></clipPath>
  <clipPath id="i2clip"><rect x="1083" y="479" width="172" height="71.5" rx="4"/></clipPath>
 </defs>
 <!-- frame shadow -->
 <g clip-path="url(#cclip)"><rect x="815" y="247" width="475" height="445" rx="10" fill="#eaeef9" filter="url(#fsh)"/></g>
 <path d="M855,254.5 H1272 Q1278,254.5 1278,260.5 V672 H855 Z" fill="#f0f2f8"/>
 <path d="M827,254.5 H845 Q855,254.5 855,264.5 V672 H827 Z" fill="#fff"/>
 <!-- sidebar icons -->
 <rect x="827" y="267" width="2" height="20" rx="1" fill="#2f54e6"/>
 <rect x="831" y="267" width="20" height="20" rx="3.5" fill="#f4f5fd"/>
 <g fill="none" stroke="#3358e6" stroke-width="0.9" stroke-linejoin="round" stroke-linecap="round">
  <path d="M837.4,280.8 V276.8 L841,273.5 L844.8,276.8 V280.8 H842.6 V279.3 Q842.6,277.9 841.1,277.9 Q839.6,277.9 839.6,279.3 V280.8 Z"/>
  <ellipse cx="841" cy="298.6" rx="1.8" ry="1.3"/>
  <path d="M837,305 Q837.6,301.4 841,301.4 Q844.4,301.4 845,305"/>
 </g>
 <!-- top bar -->
 <path d="M878.8,273.2 H887 Q891,273.2 891,277.2 V278.8 Q891,282.8 887,282.8 H884.6 L882.9,284.6 L881.2,282.8 H878.8 Q874.8,282.8 874.8,278.8 V277.2 Q874.8,273.2 878.8,273.2 Z" fill="#3358e6"/>
 <text x="883" y="281.2" text-anchor="middle" font-weight="700" font-size="8.2" fill="#fff" letter-spacing="-0.5">me</text>
 <rect x="1225" y="272" width="16" height="16" rx="3.5" fill="#fff"/>
 <g fill="none" stroke="#5675ea" stroke-width="0.9">
  <circle cx="1233" cy="280" r="4.9"/>
  <path d="M1232.4,275.2 Q1234.8,277 1233,278.8 Q1230.8,280.2 1231.6,281.8 L1230.6,284.4 M1237.6,280.6 Q1235.2,281 1235.6,282.6 Q1235,283.6 1234.4,284.6"/>
 </g>
 <circle cx="1254.8" cy="280" r="7.8" fill="#3358e6"/>
 <text x="1254.8" y="281.4" text-anchor="middle" font-size="4.8" fill="#dfe6ff" stroke="#dfe6ff" stroke-width="0.15">DT</text>

 <!-- banner -->
 <g clip-path="url(#bclip)">
  <rect x="871" y="304" width="392" height="120" fill="url(#bn)"/>
  <path d="M880,304 H938.3 L928.4,372 Z" fill="url(#refl)"/>
  <path d="M1224,304 Q1213,360 1216,424 H1263 V304 Z" fill="#fff" opacity="0.17"/>
  <g fill="#fff" opacity="0.16">
   <path d="M1126,346 Q1126,339 1134,339 Q1136,332 1145,332 Q1153,332 1155,338 Q1166,338 1166,346 Z"/>
   <path d="M1160,360 Q1160,354 1166,354 Q1168,349 1174,349 Q1180,349 1181,355 V360 Z"/>
  </g>
  <!-- trees -->
  <circle cx="1222" cy="364" r="12.3" fill="#c6dfd3"/>
  <rect x="1229" y="332" width="21" height="37" rx="10.5" fill="#dce7e0"/>
  <g stroke="#3a3d48" stroke-width="0.5" fill="none">
   <path d="M1222,366 V424 M1215,357 L1222,366 L1227,361"/>
   <path d="M1239.6,344 V424 M1233,339 L1239.6,350 L1246,344"/>
  </g>
  <!-- person -->
  <path d="M1157.5,424 L1157.5,398 L1160.4,381 Q1162,376 1166,375.5 L1181,374.5 L1190.6,379.2 L1198,375.5 L1213,373.6 L1220.8,377.4 L1230.2,398 L1236,424 Z" fill="#fff"/>
  <path d="M1184.5,371 L1196,368 L1197.5,380 Q1196.5,388 1189.6,388 Q1183,387 1182.5,380 Z" fill="#e5a592"/>
  <path d="M1181.8,376.8 Q1182.5,389.6 1189.6,389.3 Q1197.5,388.8 1198.3,377.6" fill="none" stroke="#fff" stroke-width="1.1"/>
  <path d="M1181.6,376.6 Q1182.3,389.9 1189.6,389.7 Q1197.8,389.2 1198.5,377.4" fill="none" stroke="#5a5e6a" stroke-width="0.55"/>
  <path d="M1181,355 Q1189,356.5 1194,360 L1196,364 Q1197,368 1196,371.5 Q1192,374.5 1186,374 L1184.4,373.3 Q1179.5,371 1178,367.5 Q1176.3,363.5 1177.5,358.5 Z" fill="#e8a897"/>
  <circle cx="1198.3" cy="364.6" r="2.7" fill="#e8a897"/>
  <path d="M1179.5,354.5 Q1177.5,347 1184,345.5 Q1188.8,345 1189.6,349.2 Q1196.5,350.5 1199.2,356 Q1200.5,361 1197.2,364.8 L1194.8,364.5 Q1193.5,359.5 1189.5,358 Q1184,357.5 1180.5,356 Z" fill="#1f2430"/>
  <path d="M1177.6,358.8 L1182.5,359.6 M1180,361.9 h3 M1186,362.2 h2.6 M1183.5,373.2 Q1186,372.5 1187.5,370.6" stroke="#1f2430" stroke-width="0.8" fill="none"/>
  <path d="M1183.6,364 L1184.4,366.8" stroke="#1f2430" stroke-width="0.6" fill="none"/>
  <path d="M1173.6,401.9 L1181,400 L1205.7,402.8 L1230.2,409.4 L1235.8,415.1 L1234,424 H1185 L1175.5,413.2 Z" fill="#e5a898"/>
  <path d="M1178,405 L1174,410 M1181,406 L1178,412 M1184,407 L1182,413" stroke="#9a6658" stroke-width="0.5" fill="none"/>
  <path d="M1211,390.6 L1215,405.7 M1220.8,405.7 L1232,407.5" stroke="#333844" stroke-width="0.5" fill="none"/>
  <path d="M1117,394.3 L1156.6,394.3 L1167,420.8 L1126.4,422.6 Z" fill="#23262e"/>
  <path d="M1128,394.3 L1145,394.3 L1166,420.8 L1150,420.8 Z" fill="#5f6a88"/>
  <circle cx="1141.5" cy="408" r="1.8" fill="#23262e"/>
  <path d="M1167,420.8 L1171.3,390.6" stroke="#23262e" stroke-width="0.9"/>
  <rect x="1126.4" y="421.4" width="61.3" height="3" fill="#1c1e24"/>
 </g>
 <text x="906.4" y="344.1" font-weight="700" font-size="12.6" fill="#fff" textLength="61.1" lengthAdjust="spacingAndGlyphs">Hi Steffen!</text>
 <text x="906.4" y="360.1" font-weight="700" font-size="12.6" fill="#fff" textLength="216.8" lengthAdjust="spacingAndGlyphs">What would you like to learn today?</text>
 <rect x="890.9" y="373.3" width="193.4" height="24.3" rx="3" fill="#fff"/>
 <text x="903" y="387.2" font-size="7.4" fill="#5a6170" textLength="69.2" lengthAdjust="spacingAndGlyphs">I want to learn about...</text>
 <rect x="1041.9" y="377.8" width="38" height="15.6" rx="3" fill="#3358e6"/>
 <text x="1050.9" y="388.1" font-weight="700" font-size="7.3" fill="#fff" textLength="21.5" lengthAdjust="spacingAndGlyphs">Search</text>

 <!-- continue learning -->
 <text x="871.1" y="459.2" font-weight="700" font-size="9.9" fill="#1b2956" textLength="83.8" lengthAdjust="spacingAndGlyphs">Continue Learning</text>
 <text x="1224.9" y="457.9" font-weight="700" font-size="5.8" fill="#3358e6" textLength="23" lengthAdjust="spacingAndGlyphs">Show All</text>
 <rect x="1251.4" y="452.5" width="10.8" height="7" rx="3.5" fill="#e3e8f8"/>
 <text x="1253.7" y="457.9" font-weight="700" font-size="5.8" fill="#3358e6" textLength="5.4" lengthAdjust="spacingAndGlyphs">16</text>

 <!-- cards -->
 <rect x="870" y="471" width="190" height="158.5" rx="5" fill="#dde1ee" opacity="0.6" filter="url(#csh)"/>
 <rect x="1074" y="471" width="190" height="158.5" rx="5" fill="#dde1ee" opacity="0.6" filter="url(#csh)"/>
 <rect x="871" y="471" width="188" height="157.5" rx="4.5" fill="#fff"/>
 <rect x="1075" y="471" width="188" height="157.5" rx="4.5" fill="#fff"/>

 <!-- image 1: women -->
 <g clip-path="url(#i1clip)">
  <rect x="879" y="479" width="172" height="72" fill="#353333"/>
  <g filter="url(#blur1)">
   <rect x="874" y="474" width="24" height="24" fill="#87663e"/>
   <rect x="876" y="478" width="8" height="6" fill="#c4b07a"/>
   <rect x="948" y="476" width="32" height="32" fill="#3c3836"/>
   <rect x="949" y="481" width="7" height="11" fill="#6a4a30"/>
   <rect x="957.8" y="478" width="6.7" height="23.5" fill="#2c4a86"/>
   <rect x="948" y="495" width="18" height="12" fill="#9aa2a8"/>
   <rect x="1031" y="476" width="12" height="24" fill="#6a7068"/>
   <rect x="1040" y="476" width="14" height="80" fill="#2a2828"/>
   <path d="M874,495 L902,497 L906,515 L902.8,552 H874 Z" fill="#64666c"/>
   <path d="M927,513 L945,512 L952,530 L952,552 H926 Z" fill="#606268"/>
   <path d="M902.8,511 Q915,506 928,512 L929,552 H902 Z" fill="#dcdcdc"/>
   <path d="M893.4,497.4 Q894,484 902.8,479 L937.7,478 Q948,486 948.4,500 L950,522 Q948,530 942,528 L935,512 L912,510 L900,518 Q895,515 896,506 Z" fill="#3e2e27"/>
   <path d="M906.8,488 L916.2,480 L935,481.4 L939,493.4 L936.3,505.5 L924.3,512.2 L912.2,508.2 L906.8,497.4 Z" fill="#e0bcac"/>
   <path d="M918,484 L932,484 L935,495 L926,505 Z" fill="#f0d6c6"/>
   <path d="M912,508 L924,512 L926,518 Q918,520 912,516 Z" fill="#c79e8c"/>
   <path d="M953.7,528 L961.8,509.5 L969.8,493.4 L977.9,490.7 L1036.9,490.7 L1046.2,509.5 L1047.6,552 L956.4,552 Z" fill="#bcc4ca"/>
   <path d="M1036,495 L1046,510 L1047,540 L1038,540 Z" fill="#c6ccd0"/>
   <path d="M975.2,480 L977.9,478 L1024.8,478 L1030.2,489.4 L1031.5,513.5 L1023.5,529.6 L1004.7,527 L996.6,516.2 L990,523 L977.9,520.2 L975.2,502.8 Z" fill="#cfae76"/>
   <path d="M1008,484 L1024,486 L1028,510 L1020,522 Z" fill="#d9bd88"/>
   <path d="M982,478 L1004.7,478 L1005,496 L996,502 L986,500 L982,490 Z" fill="#eccbbb"/>
   <path d="M989,493 Q995,497 1001,492 L999,496 Q995,499 991,496 Z" fill="#b84050"/>
   <path d="M952.4,531 Q958,528 965,533 L967,548 Q960,549 953,542 Z" fill="#c29a8a"/>
  </g>
  <rect x="879" y="479" width="172" height="72" fill="url(#imgfade)"/>
  <rect x="884.7" y="543.2" width="160.6" height="2" rx="1" fill="#d9d9d9"/>
  <rect x="884.7" y="543.2" width="53" height="2" rx="1" fill="#fff"/>
 </g>

 <!-- image 2: containers -->
 <g clip-path="url(#i2clip)">
  <rect x="1083" y="479" width="172" height="72" fill="#5a3a2a"/>
  <g filter="url(#blur05)">
   <rect x="1080" y="476" width="41" height="28" fill="#d0643f"/>
   <rect x="1080" y="504" width="41" height="48" fill="#b4a34a"/>
   <rect x="1121" y="476" width="36" height="31.5" fill="#c95c42"/>
   <rect x="1121" y="507.5" width="36" height="44.5" fill="#bcad52"/>
   <rect x="1157" y="476" width="35" height="34" fill="#c4563f"/>
   <rect x="1157" y="510" width="35" height="42" fill="#bd503f"/>
   <rect x="1192" y="476" width="30" height="36" fill="#d2b85c"/>
   <rect x="1192" y="512" width="30" height="40" fill="#aa4f40"/>
   <rect x="1222" y="476" width="36" height="39" fill="#56ab98"/>
   <rect x="1222" y="515" width="36" height="37" fill="#46907a"/>
  </g>
  <g stroke="#000" stroke-opacity="0.16" stroke-width="0.7"><path d="M1084.6,479 V551 M1089.1,479 V551 M1093.7,479 V551 M1098.2,479 V551 M1102.8,479 V551 M1107.3,479 V551 M1111.9,479 V551 M1116.4,479 V551 M1125.5,479 V551 M1130.0,479 V551 M1134.5,479 V551 M1139.0,479 V551 M1143.5,479 V551 M1148.0,479 V551 M1152.5,479 V551 M1162.0,479 V551 M1167.0,479 V551 M1172.0,479 V551 M1177.0,479 V551 M1182.0,479 V551 M1187.0,479 V551 M1197.0,479 V551 M1202.0,479 V551 M1207.0,479 V551 M1212.0,479 V551 M1217.0,479 V551 M1226.5,479 V551 M1231.0,479 V551 M1235.5,479 V551 M1240.0,479 V551 M1244.5,479 V551 M1249.0,479 V551 M1253.5,479 V551"/></g>
  <g stroke="#2a1a14" stroke-opacity="0.7" stroke-width="1.4"><path d="M1080,476 V552 M1080,504 H1121 M1121,476 V552 M1121,507.5 H1157 M1157,476 V552 M1157,510 H1192 M1192,476 V552 M1192,512 H1222 M1222,476 V552 M1222,515 H1258"/></g>
  <g fill="#fff" opacity="0.35">
   <rect x="1087" y="485" width="2" height="2"/><rect x="1110" y="490" width="3" height="3"/><rect x="1126" y="492" width="2" height="2"/>
   <rect x="1164" y="496" width="2" height="2"/><rect x="1198" y="486" width="2" height="2"/><rect x="1232" y="488" width="2" height="2"/>
   <rect x="1091" y="512" width="2" height="2"/><rect x="1163" y="520" width="4" height="2"/><rect x="1206" y="522" width="2" height="2"/>
  </g>
  <g filter="url(#blur05)">
   <path d="M1104,552 L1106.3,543 Q1110,531 1115.3,527.8 L1122.5,523.3 L1134.2,522.4 L1137.8,528.7 L1139,552 Z" fill="#c04a30"/>
   <path d="M1118,526 L1113,552 M1122,524 L1120,552" stroke="#4a2a26" stroke-width="2" opacity="0.7"/>
   <path d="M1124.3,552 Q1124,534 1129,529.6 Q1136,529 1138,535 L1139,552 Z" fill="#8a8ea4"/>
   <path d="M1119,514 L1138.7,510 L1139,519 Q1134,522 1124,521.5 L1120,519 Z" fill="#3a3230"/>
   <path d="M1131,512 Q1137,512 1138.5,516 Q1137,521 1131,520 Z" fill="#8a6650"/>
   <path d="M1120,517 L1138,511" stroke="#b8b8b8" stroke-width="0.9" opacity="0.8"/>
   <path d="M1117.5,514.3 Q1116,503 1124,499 Q1132,496 1137,501 Q1140,505 1139.6,508.9 Z" fill="#e6ac20"/>
   <path d="M1116.6,514.8 L1140.6,508.4" stroke="#d09418" stroke-width="2" stroke-linecap="round"/>
   <path d="M1127,500.5 Q1131,499.5 1133,502" stroke="#f5d060" stroke-width="1" fill="none" opacity="0.7"/>
  </g>
  <rect x="1083" y="479" width="172" height="72" fill="url(#imgfade)"/>
  <rect x="1088.7" y="543.2" width="160.5" height="2" rx="1" fill="#d9d9d9"/>
  <rect x="1088.7" y="543.2" width="125.3" height="2" rx="1" fill="#fff"/>
 </g>

 <!-- tags -->
 <rect x="879.2" y="557.2" width="60.6" height="11.6" rx="2" fill="#d2ebe5"/>
 <circle cx="885" cy="563" r="2.6" fill="none" stroke="#4a5f70" stroke-width="0.7"/>
 <path d="M883.8,564.2 L886.2,561.8" stroke="#4a5f70" stroke-width="0.6"/>
 <text x="890" y="565.1" font-size="5.8" fill="#46566a" textLength="45.6" lengthAdjust="spacingAndGlyphs">Learning Journey</text>
 <rect x="1083" y="557" width="33.7" height="11.7" rx="2" fill="#e1e6f9"/>
 <path d="M1086.2,560.2 Q1088,559.6 1089,560.6 Q1090,559.6 1091.8,560.2 V566 Q1090,565.4 1089,566.4 Q1088,565.4 1086.2,566 Z M1089,560.6 V566.4" fill="none" stroke="#4a5576" stroke-width="0.7"/>
 <text x="1094.8" y="565.1" font-size="5.8" fill="#46507a" textLength="18.3" lengthAdjust="spacingAndGlyphs">Course</text>

 <text x="879.5" y="584" font-weight="700" font-size="8.3" fill="#1b2956" textLength="147.5" lengthAdjust="spacingAndGlyphs">Introduction to Project Management</text>
 <text x="1083" y="584" font-weight="700" font-size="8.3" fill="#1b2956" textLength="155.4" lengthAdjust="spacingAndGlyphs">Time Management Strategies for Busy</text>
 <text x="1083" y="596" font-weight="700" font-size="8.3" fill="#1b2956" textLength="54" lengthAdjust="spacingAndGlyphs">Professionals</text>

 <g fill="none" stroke="#3358e6" stroke-width="0.9" stroke-linejoin="round">
  <path d="M881.6,608.6 H886.4 V617 L884,614.8 L881.6,617 Z"/>
  <path d="M1085.4,608.6 H1090.2 V617 L1087.8,614.8 L1085.4,617 Z"/>
  <rect x="994.3" y="605.5" width="56.4" height="15" rx="3"/>
  <rect x="1198.1" y="605.5" width="56.4" height="15" rx="3"/>
  <path d="M1036.4,612.7 H1042.8 M1040.2,610.6 L1042.8,612.7 L1040.2,614.8"/>
  <path d="M1240.2,612.7 H1246.6 M1244,610.6 L1246.6,612.7 L1244,614.8"/>
 </g>
 <text x="1003.1" y="614.9" font-weight="700" font-size="6.9" fill="#3358e6" textLength="28" lengthAdjust="spacingAndGlyphs">Continue</text>
 <text x="1206.9" y="614.9" font-weight="700" font-size="6.9" fill="#3358e6" textLength="28" lengthAdjust="spacingAndGlyphs">Continue</text>

 <text x="871.1" y="662.9" font-weight="700" font-size="9" fill="#1b2956" textLength="50.6" lengthAdjust="spacingAndGlyphs">All Content</text>
 <rect x="795" y="675" width="483" height="6" fill="#d8def8"/>
</svg>

<div id="fade"></div>
</body></html>
